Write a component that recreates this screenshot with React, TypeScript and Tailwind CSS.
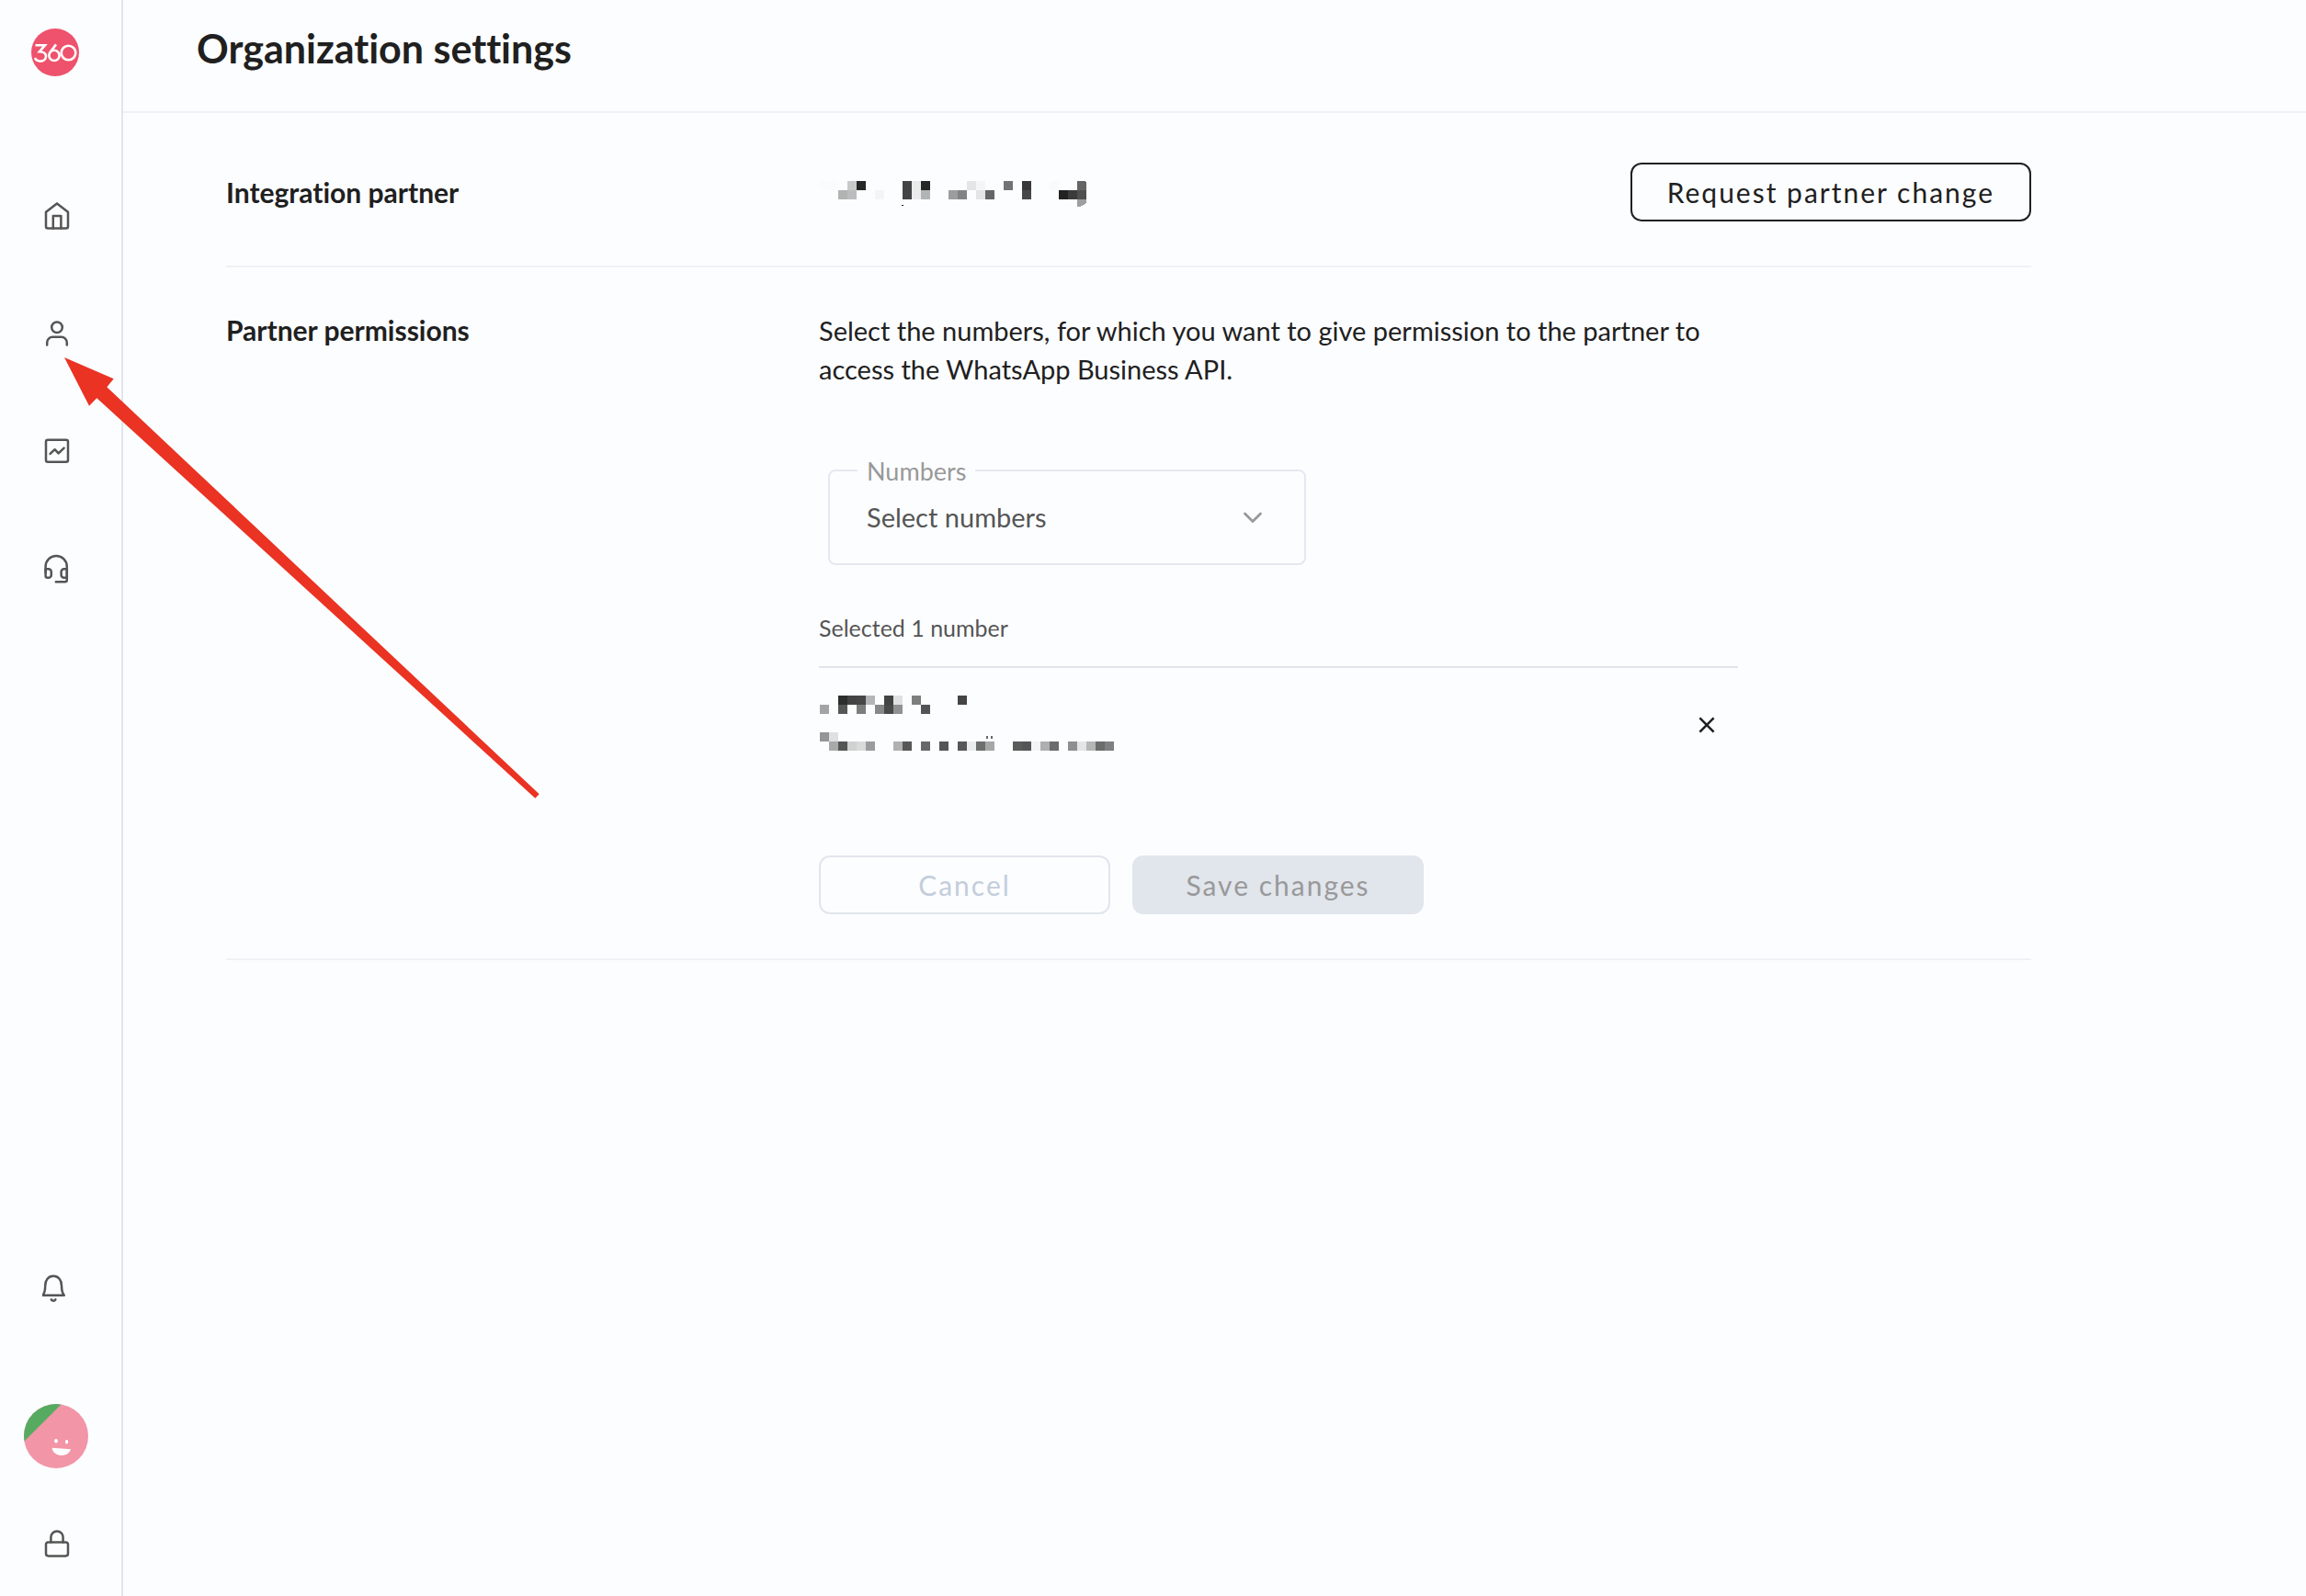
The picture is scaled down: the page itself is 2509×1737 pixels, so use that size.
import { clsx } from "clsx";
import type { ReactNode } from "react";

type Cell = [col: number, row: number, color: string];

const partnerCells: Cell[] = [
  [0, 0, "#fafbfc"], [1, 0, "#fafbfc"], [3, 0, "#c8c9c9"], [4, 0, "#262626"],
  [9, 0, "#444444"], [10, 0, "#e9eaea"], [11, 0, "#262626"], [16, 0, "#e4e5e7"],
  [17, 0, "#f4f5f7"], [20, 0, "#727473"], [22, 0, "#383838"], [25, 0, "#fafafc"],
  [2, 1, "#b1b3b2"], [3, 1, "#bbbcbe"], [6, 1, "#f4f5f7"], [9, 1, "#444444"],
  [10, 1, "#ebebed"], [11, 1, "#b3b4b6"], [14, 1, "#9c9d9f"], [15, 1, "#828483"],
  [17, 1, "#e4e5e7"], [18, 1, "#666666"], [22, 1, "#474747"], [26, 1, "#222222"],
  [27, 1, "#3b3b3b"], [28, 1, "#4f4f4f"],
];

const nameCells: Cell[] = [
  [2, 0, "#2d2d2d"], [3, 0, "#434343"], [4, 0, "#474747"], [5, 0, "#b4b5b7"],
  [7, 0, "#424342"], [8, 0, "#e0e1e3"], [10, 0, "#7e7e7e"], [15, 0, "#444444"],
  [0, 1, "#a3a4a6"], [2, 1, "#555756"], [4, 1, "#7c7e7d"], [6, 1, "#87888a"],
  [7, 1, "#484a49"], [8, 1, "#909291"], [11, 1, "#545454"],
];

const numberCells: Cell[] = [
  [0, 0, "#959595"], [1, 0, "#dfe0e2"],
  [1, 1, "#a8aaa9"], [2, 1, "#555555"], [3, 1, "#d0d1d1"], [4, 1, "#d9dada"],
  [5, 1, "#9b9d9c"], [8, 1, "#b0b1b3"], [9, 1, "#575757"], [11, 1, "#676968"],
  [13, 1, "#555555"], [15, 1, "#575757"], [16, 1, "#ebecee"], [17, 1, "#6d6f6e"],
  [18, 1, "#a6a7a9"], [21, 1, "#5b5b5b"], [22, 1, "#555555"], [23, 1, "#f3f4f6"],
  [24, 1, "#aeafb1"], [25, 1, "#6c6c6c"], [27, 1, "#8e8f91"], [28, 1, "#e4e5e7"],
  [29, 1, "#b5b7b6"], [30, 1, "#6b6d6c"], [31, 1, "#7f8180"],
];

// Pixelated stand-in for private values
function Mosaic({
  cells,
  className,
  viewBox,
  children,
}: {
  cells: Cell[];
  className: string;
  viewBox: string;
  children?: ReactNode;
}) {
  return (
    <svg
      aria-hidden="true"
      viewBox={viewBox}
      className={className}
      shapeRendering="crispEdges"
    >
      {cells.map(([col, row, color]) => (
        <rect
          key={`${col}-${row}`}
          x={col * 10}
          y={row * 10}
          width="10"
          height="10"
          fill={color}
        />
      ))}
      {children}
    </svg>
  );
}

function Icon({ children }: { children: ReactNode }) {
  return (
    <svg
      aria-hidden="true"
      viewBox="0 0 32 32"
      className="size-8"
      fill="none"
      stroke="currentColor"
      strokeWidth="2.5"
      strokeLinecap="round"
      strokeLinejoin="round"
    >
      {children}
    </svg>
  );
}

const navItems = [
  {
    id: "home",
    icon: (
      <>
        <path d="M4 11.800 16 2.400l12 9.400v15.800a2 2 0 0 1-2 2H6a2 2 0 0 1-2-2Z" />
        <path d="M11.800 29.400V16h8.600v13.400" />
      </>
    ),
  },
  {
    id: "account",
    icon: (
      <>
        <circle cx="16" cy="9.300" r="5.800" />
        <path d="M5.200 28.400v-2.600a6 6 0 0 1 6-6h9.600a6 6 0 0 1 6 6v2.600" />
      </>
    ),
  },
  {
    id: "insights",
    icon: (
      <>
        <rect x="4" y="3.700" width="24" height="24" rx="2" />
        <path d="m8.600 18.800 5-4.600 4 4.200 6-5.800" />
      </>
    ),
  },
  {
    id: "support",
    icon: (
      <>
        <path d="M3.600 20v-6.400a11.600 11.600 0 0 1 23.200 0v14.600a2 2 0 0 1-2 2H14.800" />
        <path d="M3.600 16.200h3.200a3 3 0 0 1 3 3v3.600a3 3 0 0 1-3 3H5.600a2 2 0 0 1-2-2Z" />
        <path d="M26.800 16.200h-3.200a3 3 0 0 0-3 3v3.600a3 3 0 0 0 3 3h3.200Z" />
      </>
    ),
  },
];

function Sidebar() {
  return (
    <aside className="flex min-h-screen w-[134px] shrink-0 flex-col items-center border-r-2 border-[#e1e5ec] pt-[31px] pr-2 pb-[41px] text-[#555555]">
      <a href="#" className="mb-34">
        <svg aria-hidden="true" viewBox="0 0 56 52" className="h-13 w-14">
          <circle cx="26" cy="26" r="26" fill="#ee526c" />
          <g fill="none" stroke="#ffffff" strokeWidth="2.6">
            <path d="M4.500 18.200h10.500l-6 7c4 0 7 2 7 5s-2.600 5.400-6 5.400c-2.800 0-5-1.200-6-3.600" />
            <path d="m27 17.400-6.600 8.600" />
            <circle cx="25" cy="29.400" r="5.600" />
            <circle cx="40.500" cy="26.500" r="7.800" />
          </g>
        </svg>
      </a>
      <nav className="flex flex-col gap-24">
        {navItems.map((item) => (
          <a key={item.id} href={`#${item.id}`}>
            <Icon>{item.icon}</Icon>
          </a>
        ))}
      </nav>
      <div className="mt-auto flex flex-col items-center">
        <button type="button" className="mb-[110px]">
          <Icon>
            <path d="M.4 23.800h23.400c-2.200-2.600-2.800-6-2.800-10.600C21 7.200 17.600 2.800 12.100 2.800S3.200 7.200 3.200 13.200c0 4.600-.6 8-2.800 10.600Z" />
            <path d="M9.800 28.400a2.600 2.600 0 0 0 4.600 0" />
          </Icon>
        </button>
        <button type="button" className="mb-[66px]">
          <svg
            aria-hidden="true"
            viewBox="0 0 72 70"
            className="h-[70px] w-[72px]"
          >
            <clipPath id="avatar">
              <circle cx="35" cy="35" r="35" />
            </clipPath>
            <g clipPath="url(#avatar)">
              <path fill="#f195a7" d="M0 0h70v70H0z" />
              <path fill="#56ab61" d="M0 0h41L0 41Z" />
            </g>
            <g fill="#ffffff">
              <ellipse cx="35" cy="40.300" rx="1.800" ry="2.200" />
              <ellipse cx="46.600" cy="41.300" rx="1.600" ry="2.200" />
              <path d="m30.600 47.800 20.400 1.500c-1.200 4.200-5 6.700-10.300 6.700-5.600-.2-9.700-3.400-10.100-8.200Z" />
            </g>
          </svg>
        </button>
        <button type="button">
          <Icon>
            <rect x="4" y="14.400" width="24" height="15" rx="2.600" />
            <path d="M9.400 14.400V9a6.600 6.600 0 0 1 13.200 0v5.400" />
          </Icon>
        </button>
      </div>
    </aside>
  );
}

function Row({
  title,
  className,
  children,
}: {
  title: string;
  className?: string;
  children: ReactNode;
}) {
  return (
    <section
      className={clsx(
        "flex max-w-[1964px] border-b-2 border-[#f0f1f4] pb-12",
        className,
      )}
    >
      <h2 className="w-[645px] shrink-0 text-[30px] leading-10 font-bold">
        {title}
      </h2>
      {children}
    </section>
  );
}

export default function App() {
  return (
    <div className="relative flex min-h-screen bg-[#fcfdff] font-['Lato','Open_Sans',sans-serif] text-[29px] leading-[42px] text-[#202020] [font-variant-ligatures:none]">
      <Sidebar />
      <main className="min-w-0 flex-1">
        <header className="border-b-2 border-[#f0f1f4] px-20 pt-[27px] pb-[42px]">
          <h1 className="text-[43px] leading-[52px] font-bold">
            Organization settings
          </h1>
        </header>

        <div className="px-28">
          <Row title="Integration partner" className="items-center pt-[54px]">
            <Mosaic
              cells={partnerCells}
              viewBox="-1 -4 300 32"
              className="h-8 w-[300px]"
            >
              <path d="M280 0h8l2 2v8h-10Z" fill="#656565" />
              <path d="M280 20h10v4q-4 4-10 4Z" fill="#9e9fa1" />
              <rect x="89" y="26" width="2" height="1" fill="#202020" />
            </Mosaic>
            <button
              type="button"
              className="ml-auto h-16 rounded-xl border-2 border-[#202020] px-[38px] text-[30px] leading-10 tracking-[2px]"
            >
              Request partner change
            </button>
          </Row>

          <Row title="Partner permissions" className="pt-12">
            <div className="max-w-[1000px] flex-1">
              <p>
                Select the numbers, for which you want to give permission to the
                partner to access the WhatsApp Business API.
              </p>

              <div className="relative mt-22 ml-2.5 w-[520px]">
                <label
                  htmlFor="numbers"
                  className="absolute -top-3.5 left-8 bg-[#fcfdff] px-2.5 text-[27px] leading-8 text-[#999999]"
                >
                  Numbers
                </label>
                <select
                  id="numbers"
                  className="h-[104px] w-full appearance-none rounded-lg border-2 border-[#e6e8f0] px-10 text-[#555555]"
                >
                  <option>Select numbers</option>
                </select>
                <svg
                  aria-hidden="true"
                  viewBox="0 0 24 24"
                  className="pointer-events-none absolute top-10 right-[46px] size-6"
                  fill="none"
                  stroke="#999999"
                  strokeWidth="2.8"
                  strokeLinecap="round"
                  strokeLinejoin="round"
                >
                  <path d="m3.500 8 8.500 8.500L20.500 8" />
                </svg>
              </div>

              <p className="mt-12 border-b-2 border-[#e1e5ec] pb-[22px] text-[25px] leading-10 text-[#555555]">
                Selected 1 number
              </p>
              <div className="flex items-center justify-between pt-[30px] pr-[23px]">
                <div className="flex h-16 flex-col gap-5">
                  <Mosaic
                    cells={nameCells}
                    viewBox="-1 0 330 20"
                    className="h-5 w-[330px]"
                  />
                  <Mosaic
                    cells={numberCells}
                    viewBox="-1 0 330 20"
                    className="h-5 w-[330px]"
                  >
                    <path d="M181 4h2v3h-2zM186 4h2v3h-2z" fill="#666666" />
                  </Mosaic>
                </div>
                <button type="button" className="p-px">
                  <svg
                    aria-hidden="true"
                    viewBox="0 0 20 20"
                    className="size-5"
                    stroke="#202020"
                    strokeWidth="2.6"
                  >
                    <path d="m2.400 2.400 15.200 15.200m0-15.200L2.400 17.600" />
                  </svg>
                </button>
              </div>

              <div className="mt-[110px] flex gap-6 text-[30px] leading-10 tracking-[2px]">
                <button
                  type="button"
                  className="h-16 w-[317px] rounded-xl border-2 border-[#e1e5ec] text-[#c3cddb]"
                >
                  Cancel
                </button>
                <button
                  type="button"
                  className="h-16 w-[317px] rounded-xl bg-[#e1e5ec] text-[#999999]"
                >
                  Save changes
                </button>
              </div>
            </div>
          </Row>
        </div>
      </main>

      <svg
        aria-hidden="true"
        viewBox="0 0 518 480"
        className="pointer-events-none absolute top-[389px] left-[70px] h-[480px] w-[518px]"
      >
        <path
          fill="#ea3323"
          d="M0 0l53.700 23.300-7.400 9 470.400 443-4.400 4.400L35.300 44.300 27 52.700Z"
        />
      </svg>
    </div>
  );
}
